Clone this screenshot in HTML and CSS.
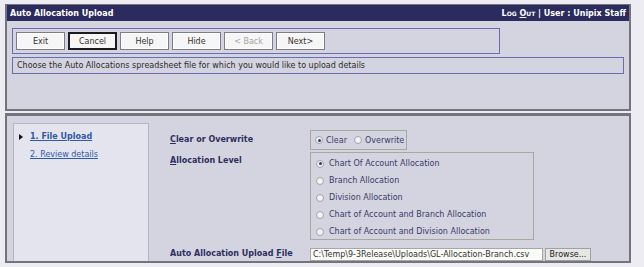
FILE: index.html
```html
<!DOCTYPE html>
<html>
<head>
<meta charset="utf-8">
<link rel="stylesheet" href="styles.css">
</head>
<body>
<div class="top">
  <div class="titlebar">
    <span class="title">Auto Allocation Upload</span>
    <span class="user"><span class="logout">Log <u>O</u>ut</span> | User : Unipix Staff</span>
  </div>
  <div class="topbody">
    <div class="toolbar">
      <span class="btn">Exit</span>
      <span class="btn focus">Cancel</span>
      <span class="btn">Help</span>
      <span class="btn">Hide</span>
      <span class="btn disabled">&lt; Back</span>
      <span class="btn">Next&gt;</span>
    </div>
    <div class="msg">Choose the Auto Allocations spreadsheet file for which you would like to upload details</div>
  </div>
</div>
<div class="bottom">
  <div class="nav">
    <div class="navitem current"><span class="arrow"></span><a>1. File Upload</a></div>
    <div class="navitem"><a>2. Review details</a></div>
  </div>
  <div class="content">
    <div class="label row1"><u>C</u>lear or Overwrite</div>
    <div class="group inline">
      <span class="opt"><span class="radio on"></span>Clear</span>
      <span class="opt"><span class="radio"></span>Overwrite</span>
    </div>
    <div class="label row2"><u>A</u>llocation Level</div>
    <div class="group list">
      <div class="opt"><span class="radio on"></span>Chart Of Account Allocation</div>
      <div class="opt"><span class="radio"></span>Branch Allocation</div>
      <div class="opt"><span class="radio"></span>Division Allocation</div>
      <div class="opt"><span class="radio"></span>Chart of Account and Branch Allocation</div>
      <div class="opt"><span class="radio"></span>Chart of Account and Division Allocation</div>
    </div>
    <div class="label row3">Auto Allocation Upload <u>F</u>ile</div>
    <div class="file">
      <span class="filebox">C:\Temp\9-3Release\Uploads\GL-Allocation-Branch.csv</span>
      <span class="browse">Browse...</span>
    </div>
  </div>
</div>
</body>
</html>
```
FILE: styles.css
```css
* { box-sizing: border-box; }
html, body { margin: 0; padding: 0; }
body {
  width: 644px;
  height: 267px;
  overflow: hidden;
  background: #ececf2;
  font-family: "DejaVu Sans", Verdana, sans-serif;
  font-size: 8px;
  color: #333;
}
.top {
  margin: 4px 0 0 5px;
  width: 626px;
  height: 107px;
  border: 2px solid #74747c;
  border-top: 1px solid #74747c;
  background: #d4d4e0;
}
.titlebar {
  height: 16px;
  background: #2b2b5e;
  color: #fff;
  font-weight: bold;
  display: flex;
  justify-content: space-between;
  align-items: center;
  padding: 0 3px 0 3px;
}
.logout { font-variant: small-caps; }
.topbody { padding: 7px 0 0 5px; }
.toolbar {
  width: 488px;
  height: 26px;
  border: 1px solid #6c6cb0;
  padding: 3px 0 0 3px;
  display: flex;
  gap: 3px;
}
.btn {
  width: 49px;
  height: 18px;
  background: #f6f6f6;
  border: 1px solid #7c7c84;
  box-shadow: inset 0 0 0 1px #ffffff;
  display: flex;
  align-items: center;
  justify-content: center;
  color: #333;
}
.btn.focus { border: 2px solid #1c1c1c; box-shadow: none; }
.btn.disabled { color: #a4a4a4; }
.msg {
  margin-top: 3px;
  width: 612px;
  height: 17px;
  border: 1px solid #6c6cb0;
  padding: 0 4px;
  line-height: 15px;
  color: #2a2a2a;
}
.bottom {
  margin: 2px 0 0 5px;
  width: 626px;
  height: 150px;
  border: 2px solid #74747c;
  border-top: 3px solid #74747c;
  background: #d4d4e0;
  padding: 7px 0 0 6px;
  display: flex;
  overflow: hidden;
}
.nav {
  width: 136px;
  height: 200px;
  flex: none;
  background: #e4e4ee;
  border: 1px solid #b4b4c4;
  padding: 4px 0 0 4px;
}
.navitem {
  height: 18px;
  line-height: 18px;
  display: flex;
  align-items: center;
  padding-left: 12px;
  position: relative;
}
.navitem a { color: #2f5aa8; text-decoration: underline; }
.navitem.current a { font-weight: bold; }
.arrow {
  position: absolute;
  left: 1px;
  top: 6px;
  width: 0; height: 0;
  border-left: 4px solid #111;
  border-top: 3px solid transparent;
  border-bottom: 3px solid transparent;
}
.content {
  padding: 7px 0 0 21px;
  display: grid;
  grid-template-columns: 140px auto;
  align-content: start;
  row-gap: 2px;
}
.label {
  font-weight: bold;
  color: #2e2e5e;
  line-height: 16px;
}
.row1 { align-self: center; }
.row2 { margin-top: 1px; }
.row3 { align-self: center; margin-top: 4px; }
.group {
  border: 1px solid #a8a8a0;
  justify-self: start;
  color: #3a3a68;
}
.group.inline {
  height: 20px;
  display: flex;
  align-items: center;
  padding: 0 2px 0 4px;
  gap: 7px;
}
.group.list {
  width: 224px;
  height: 88px;
  padding: 2px 0 0 5px;
}
.opt { display: flex; align-items: center; gap: 5px; white-space: nowrap; }
.inline .opt { gap: 3px; }
.list .opt { height: 17px; }
.radio {
  width: 8px;
  height: 8px;
  border-radius: 50%;
  border: 1px solid #a2a2aa;
  background: #f2f2f4;
  flex: none;
  position: relative;
}
.radio.on::after {
  content: "";
  position: absolute;
  left: 1.5px; top: 1.5px;
  width: 3px; height: 3px;
  border-radius: 50%;
  background: #2a3c78;
}
.file {
  margin-top: 4px;
  display: flex;
  gap: 2px;
  align-items: center;
}
.filebox {
  width: 233px;
  height: 13px;
  background: #fbfbf8;
  border: 1px solid #a8a8a0;
  padding-left: 2px;
  line-height: 11px;
  color: #333;
  white-space: nowrap;
  overflow: hidden;
}
.browse {
  width: 46px;
  height: 13px;
  background: #e6e6e2;
  border: 1px solid #a0a0a0;
  line-height: 11px;
  text-align: center;
  color: #222;
}
```
